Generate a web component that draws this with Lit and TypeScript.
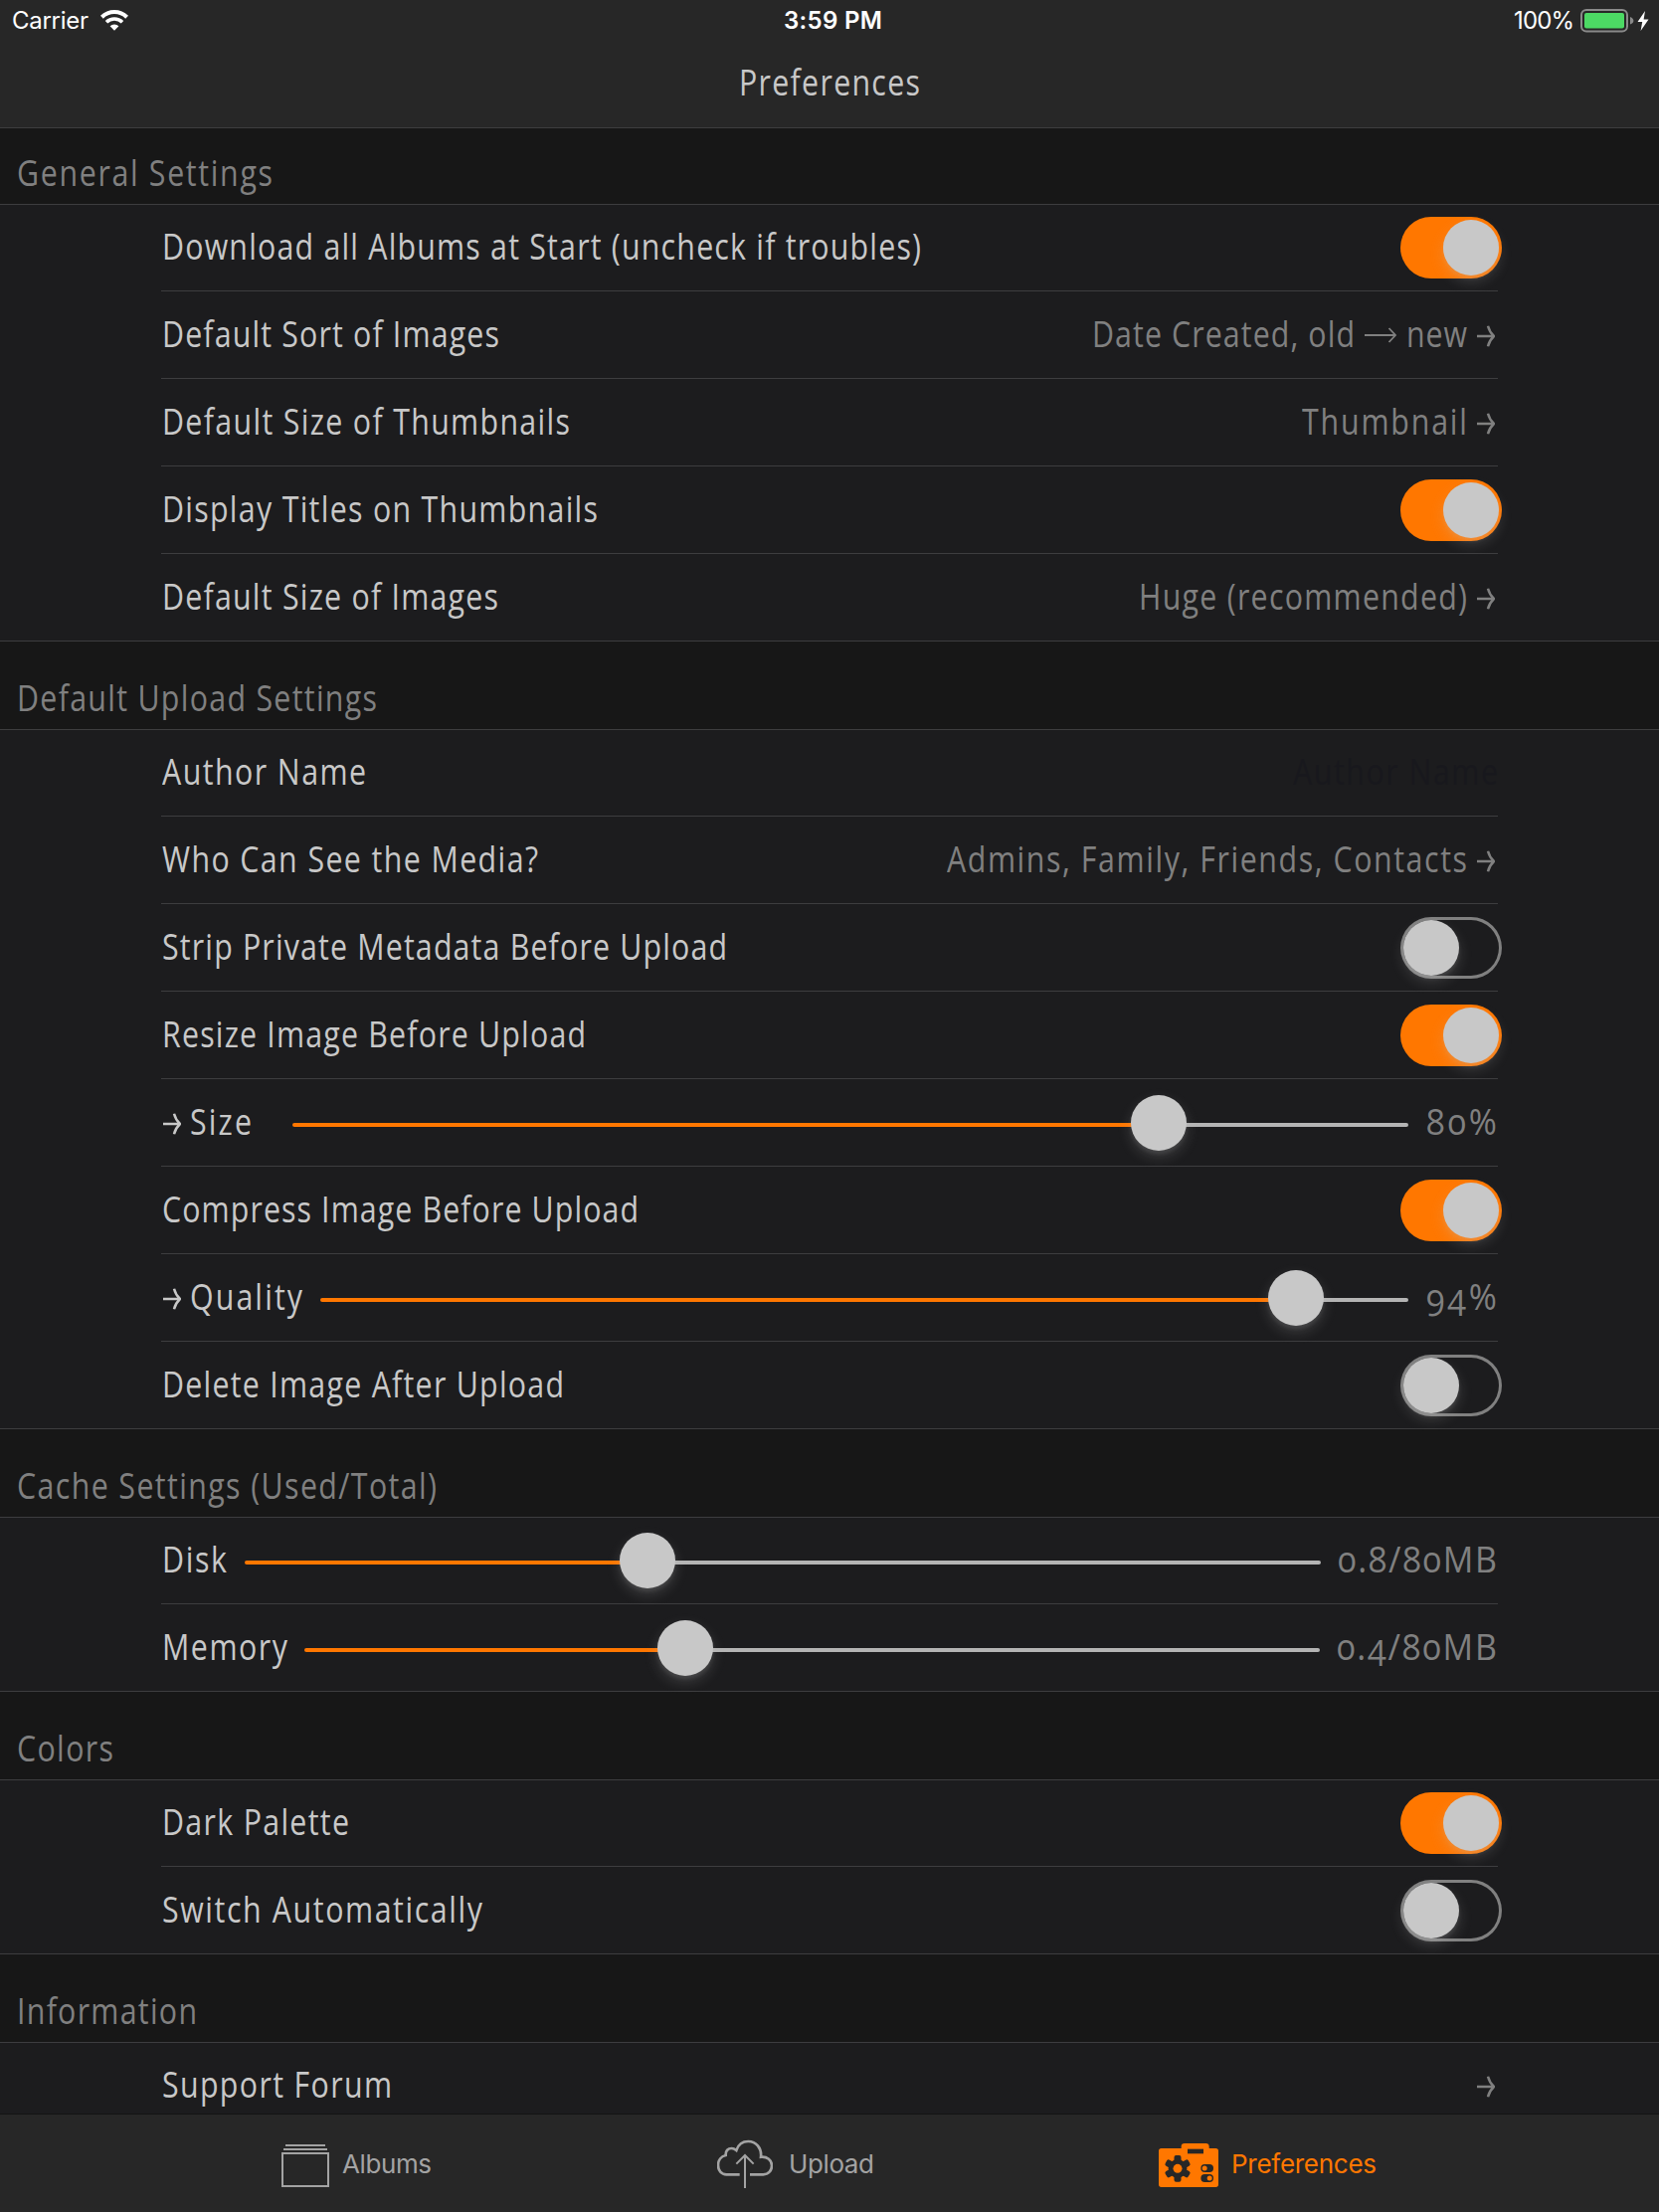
import { LitElement, html, svg, css, nothing } from "lit";
import { customElement, property } from "lit/decorators.js";

type Row = {
  label: string;
  width: number;
  arrowBefore?: boolean;
  on?: boolean;
  value?: string;
  valueWidth?: number;
  valueTail?: string;
  placeholder?: boolean;
  arrow?: boolean;
  slider?: { lead: number; trail: number; thumb: number };
};
type Group = { title: string; width: number; rows: Row[] };

const GROUPS: Group[] = [
  {
    title: "General Settings", width: 257,
    rows: [
      { label: "Download all Albums at Start (uncheck if troubles)", width: 763, on: true },
      { label: "Default Sort of Images", width: 339, value: "Date Created, old", valueWidth: 264, valueTail: "new", arrow: true },
      { label: "Default Size of Thumbnails", width: 410, value: "Thumbnail", valueWidth: 166, arrow: true },
      { label: "Display Titles on Thumbnails", width: 438, on: true },
      { label: "Default Size of Images", width: 338, value: "Huge (recommended)", valueWidth: 330, arrow: true },
    ],
  },
  {
    title: "Default Upload Settings", width: 362,
    rows: [
      { label: "Author Name", width: 205, value: "Author Name", valueWidth: 206, placeholder: true },
      { label: "Who Can See the Media?", width: 378, value: "Admins, Family, Friends, Contacts", valueWidth: 523, arrow: true },
      { label: "Strip Private Metadata Before Upload", width: 568, on: false },
      { label: "Resize Image Before Upload", width: 426, on: true },
      { label: "Size", width: 62, arrowBefore: true, value: "80%", valueWidth: 71, slider: { lead: 132, trail: 90, thumb: 871 } },
      { label: "Compress Image Before Upload", width: 479, on: true },
      { label: "Quality", width: 113, arrowBefore: true, value: "94%", valueWidth: 71, slider: { lead: 160, trail: 90, thumb: 980.5 } },
      { label: "Delete Image After Upload", width: 404, on: false },
    ],
  },
  {
    title: "Cache Settings (Used/Total)", width: 422,
    rows: [
      { label: "Disk", width: 65, value: "0.8/80MB", valueWidth: 160, slider: { lead: 84, trail: 178, thumb: 405 } },
      { label: "Memory", width: 126, value: "0.4/80MB", valueWidth: 161, slider: { lead: 144, trail: 179, thumb: 383 } },
    ],
  },
  {
    title: "Colors", width: 97,
    rows: [
      { label: "Dark Palette", width: 188, on: true },
      { label: "Switch Automatically", width: 322, on: false },
    ],
  },
  {
    title: "Information", width: 181,
    rows: [{ label: "Support Forum", width: 231, arrow: true }],
  },
];

/** One line of text, condensed by `squeeze` and tracked so that it fills the given width. */
@customElement("tracked-text")
export class TrackedText extends LitElement {
  static styles = css`
    :host { display: block; flex: none; white-space: pre; }
    .run { display: inline-block; transform-origin: 0 50%; }
  `;
  @property() text = "";
  @property({ type: Number }) width = 0;
  @property({ type: Number }) squeeze = 0.82;

  updated() {
    const run = this.renderRoot.querySelector<HTMLElement>(".run")!;
    run.style.transform = "none";
    run.style.letterSpacing = "0px";
    const natural = run.getBoundingClientRect().width;
    const gap = (this.width / this.squeeze - natural) / (this.text.length - 1);
    run.style.letterSpacing = `${gap}px`;
    if (this.squeeze !== 1) run.style.transform = `scaleX(${this.squeeze})`;
    this.style.width = `${this.width}px`;
  }
  render() {
    return html`<span class="run">${this.text}</span>`;
  }
}

const shortArrow = html`<svg class="arrow" width="18" height="22" viewBox="0 0 18 22" fill="none" stroke="currentColor" stroke-width="2.5">
  <path d="M0 11H16.5" /><path d="M11 .8Q12.6 7 17 11Q12.6 15 11 21.2" stroke-linejoin="round" />
</svg>`;
const longArrow = html`<svg class="long-arrow" width="32" height="16" viewBox="0 0 32 16" fill="none" stroke="currentColor" stroke-width="1.8">
  <path d="M0 8H31M24.5 1L31 8L24.5 15" />
</svg>`;

const wifi = html`<svg width="28" height="21" viewBox="0 0 28 21" fill="none" stroke="#fff">
  <path d="M1.4 7.2A18 18 0 0 1 26.6 7.2" stroke-width="4" />
  <path d="M6 12.2A11.6 11.6 0 0 1 22 12.2" stroke-width="3.6" />
  <path d="M14 20.8L9.6 16.3A6.3 6.3 0 0 1 18.4 16.3Z" fill="#fff" stroke="none" />
</svg>`;
const battery = html`<svg width="54" height="24" viewBox="0 0 54 24">
  <rect x="1" y="1" width="46" height="21.5" rx="5" fill="none" stroke="#8a8a8a" stroke-width="2" />
  <rect x="4" y="4" width="40" height="15.5" rx="2" fill="#4cd964" />
  <path d="M50 8Q53.4 9.4 53.4 11.8Q53.4 14.2 50 15.6Z" fill="#8a8a8a" />
</svg>`;
const bolt = html`<svg class="bolt" width="12" height="20" viewBox="0 0 12 20"><path d="M8 0L.5 11H5.2L3.6 20L11.5 8.4H6.6Z" fill="#fff" /></svg>`;

const albumsIcon = html`<svg width="48" height="48" viewBox="0 0 48 48" fill="none" stroke="currentColor" stroke-width="2">
  <path d="M4 6H44M2 10H46" /><rect x="1" y="14" width="46" height="33" />
</svg>`;
const uploadIcon = html`<svg width="56" height="50" viewBox="33 33 168 150" fill="none" stroke="currentColor" stroke-width="8">
  <path d="M101 139H61C46 139 36 127 36 111C36 96 45 84 59 81C58 67 66 60 77 60C82 60 86 62 91 66C97 48 110 39 127 39C150 39 168 59 165 86C184 84 198 96 198 112C198 127 188 139 172 139H132" />
  <path d="M117 81V180M91 107L117 81L143 107" stroke-width="6" />
</svg>`;
const preferencesIcon = html`<svg width="60" height="44" viewBox="30 45 180 132">
  <path fill="currentColor" d="M38 60H98V55Q98 45 108 45H172Q182 45 182 55V60H202Q210 60 210 68V169Q210 177 202 177H38Q30 177 30 169V68Q30 60 38 60Z" />
  <g fill="#272727">
    <rect x="117" y="62" width="48" height="14" />
    <circle cx="87" cy="121" r="28" />
    ${[0, 60, 120].map((a) => svg`<rect x="76.5" y="81" width="21" height="80" rx="6" transform="rotate(${a} 87 121)" />`)}
    <rect x="157" y="108" width="38" height="24" rx="12" />
    <rect x="157" y="138" width="38" height="24" rx="12" />
  </g>
  <g fill="currentColor">
    <circle cx="87" cy="121" r="13.5" /><circle cx="168.500" cy="120" r="7.500" /><circle cx="183.500" cy="150" r="7.500" />
  </g>
</svg>`;

@customElement("app-root")
export class AppRoot extends LitElement {
  static styles = css`
    :host {
      display: flex; flex-direction: column; width: 1668px; height: 2224px; overflow: hidden;
      background: #171717; color: #c8c8c8;
      font: 400 37px/44px "Open Sans", sans-serif; font-variant-numeric: oldstyle-nums;
    }
    svg { display: block; flex: none; }
    .top { flex: none; height: 129px; box-sizing: border-box; background: #272727; border-bottom: 1px solid #3d3d3f; }
    .status {
      display: grid; grid-template-columns: 1fr auto 1fr; align-items: center; height: 41px; padding: 0 10px 0 12px;
      color: #fff; font: 400 24px/41px Inter, sans-serif; font-variant-numeric: normal;
    }
    .side { display: flex; align-items: center; }
    .side.left { gap: 12px; }
    .side.right { justify-content: flex-end; gap: 6px; }
    .bolt { margin-left: -3px; }
    .time { font-weight: 600; padding-left: 5px; }
    .title { display: flex; justify-content: center; padding-top: 19px; }
    .list { flex: 1; min-height: 0; overflow: hidden; }
    .heading { display: flex; align-items: flex-end; height: 88px; box-sizing: border-box; padding: 0 17px 10px; color: #808080; }
    .group:first-child .heading { height: 76px; }
    .rows { background: #1c1c1e; box-shadow: inset 0 1px #3d3d3f, inset 0 -1px #3d3d3f; }
    .row { display: flex; align-items: center; justify-content: space-between; height: 88px; margin: 0 162px; }
    .row:not(:last-child) { box-shadow: inset 0 -1px #3d3d3f; }
    .row.sliding { display: grid; }
    .label, .value { display: flex; align-items: center; }
    .label tracked-text, .value tracked-text { margin-bottom: 4px; }
    .label { gap: 9px; padding-left: 1px; }
    .label .arrow { margin-left: 1px; }
    .value { gap: 10px; color: #808080; justify-content: flex-end; padding-right: 3px; }
    .value.placeholder { color: #18181d; padding-right: 0; }
    .value.numeric { padding-right: 1px; }
    .arrow { margin-top: 2px; }
    .toggle {
      width: 102px; height: 62px; box-sizing: border-box; margin-right: -4px; padding: 3px; border-radius: 31px;
      display: flex; box-shadow: inset 0 0 0 3px #808080;
    }
    .toggle.on { background: #ff7700; box-shadow: none; justify-content: flex-end; }
    .thumb { width: 56px; height: 56px; border-radius: 50%; background: #c8c8c8; box-shadow: 0 6px 14px rgba(200, 200, 200, 0.2), 0 3px 4px rgba(200, 200, 200, 0.12); }
    .slider { display: flex; align-items: center; height: 56px; }
    .done, .rest { height: 4px; margin-top: 4px; }
    .done { background: #ff7700; border-radius: 2px 0 0 2px; margin-right: -28px; }
    .rest { flex: 1; background: #b4b4b4; border-radius: 0 2px 2px 0; margin-left: -28px; }
    .slider .thumb { flex: none; position: relative; }
    .tabs {
      flex: none; display: grid; grid-template-columns: 438px 444px auto; height: 99px; box-sizing: border-box;
      padding-left: 283px; border-top: 1px solid #141414; background: #272727; color: #a3a3a3;
      font: 400 26px/34px Inter, sans-serif;
    }
    .tab { display: flex; align-items: flex-start; }
    .tab tracked-text { margin-top: 33px; }
    .tab svg { margin: 25px 13px 0 0; }
    .tab.upload svg { margin: 25px 16px 0 0; }
    .tab.preferences { color: #ff7700; }
    .tab.preferences svg { margin: 29px 13px 0 0; }
  `;

  private renderRow(row: Row) {
    const label = html`<div class="label">${row.arrowBefore ? shortArrow : nothing}
      <tracked-text .text=${row.label} .width=${row.width}></tracked-text></div>`;
    const value = row.value || row.arrow
      ? html`<div class="value ${row.placeholder ? "placeholder" : ""} ${row.slider ? "numeric" : ""}">
          ${row.value
            ? html`<tracked-text .text=${row.value} .width=${row.valueWidth!} .squeeze=${row.slider ? 0.92 : 0.82}></tracked-text>`
            : nothing}
          ${row.valueTail ? html`${longArrow}<tracked-text .text=${row.valueTail} .width=${61}></tracked-text>` : nothing}
          ${row.arrow ? shortArrow : nothing}
        </div>`
      : nothing;
    if (row.slider) {
      const { lead, trail, thumb } = row.slider;
      return html`<div class="row sliding" style="grid-template-columns:${lead}px 1fr ${trail}px">
        ${label}
        <div class="slider"><div class="done" style="width:${thumb}px"></div><div class="thumb"></div><div class="rest"></div></div>
        ${value}
      </div>`;
    }
    return html`<div class="row">${label}${row.on === undefined
      ? value
      : html`<div class="toggle ${row.on ? "on" : ""}"><div class="thumb"></div></div>`}</div>`;
  }

  render() {
    return html`
      <header class="top">
        <div class="status">
          <div class="side left"><tracked-text .text=${"Carrier"} .width=${77} .squeeze=${1}></tracked-text>${wifi}</div>
          <tracked-text class="time" .text=${"3:59 PM"} .width=${99} .squeeze=${1}></tracked-text>
          <div class="side right"><tracked-text .text=${"100%"} .width=${61} .squeeze=${1}></tracked-text>${battery}${bolt}</div>
        </div>
        <div class="title"><tracked-text .text=${"Preferences"} .width=${182}></tracked-text></div>
      </header>
      <main class="list">
        ${GROUPS.map((g) => html`<section class="group">
          <div class="heading"><tracked-text .text=${g.title} .width=${g.width}></tracked-text></div>
          <div class="rows">${g.rows.map((r) => this.renderRow(r))}</div>
        </section>`)}
      </main>
      <nav class="tabs">
        <div class="tab">${albumsIcon}<tracked-text .text=${"Albums"} .width=${90} .squeeze=${1}></tracked-text></div>
        <div class="tab upload">${uploadIcon}<tracked-text .text=${"Upload"} .width=${86} .squeeze=${1}></tracked-text></div>
        <div class="tab preferences">${preferencesIcon}<tracked-text .text=${"Preferences"} .width=${146} .squeeze=${1}></tracked-text></div>
      </nav>
    `;
  }
}
